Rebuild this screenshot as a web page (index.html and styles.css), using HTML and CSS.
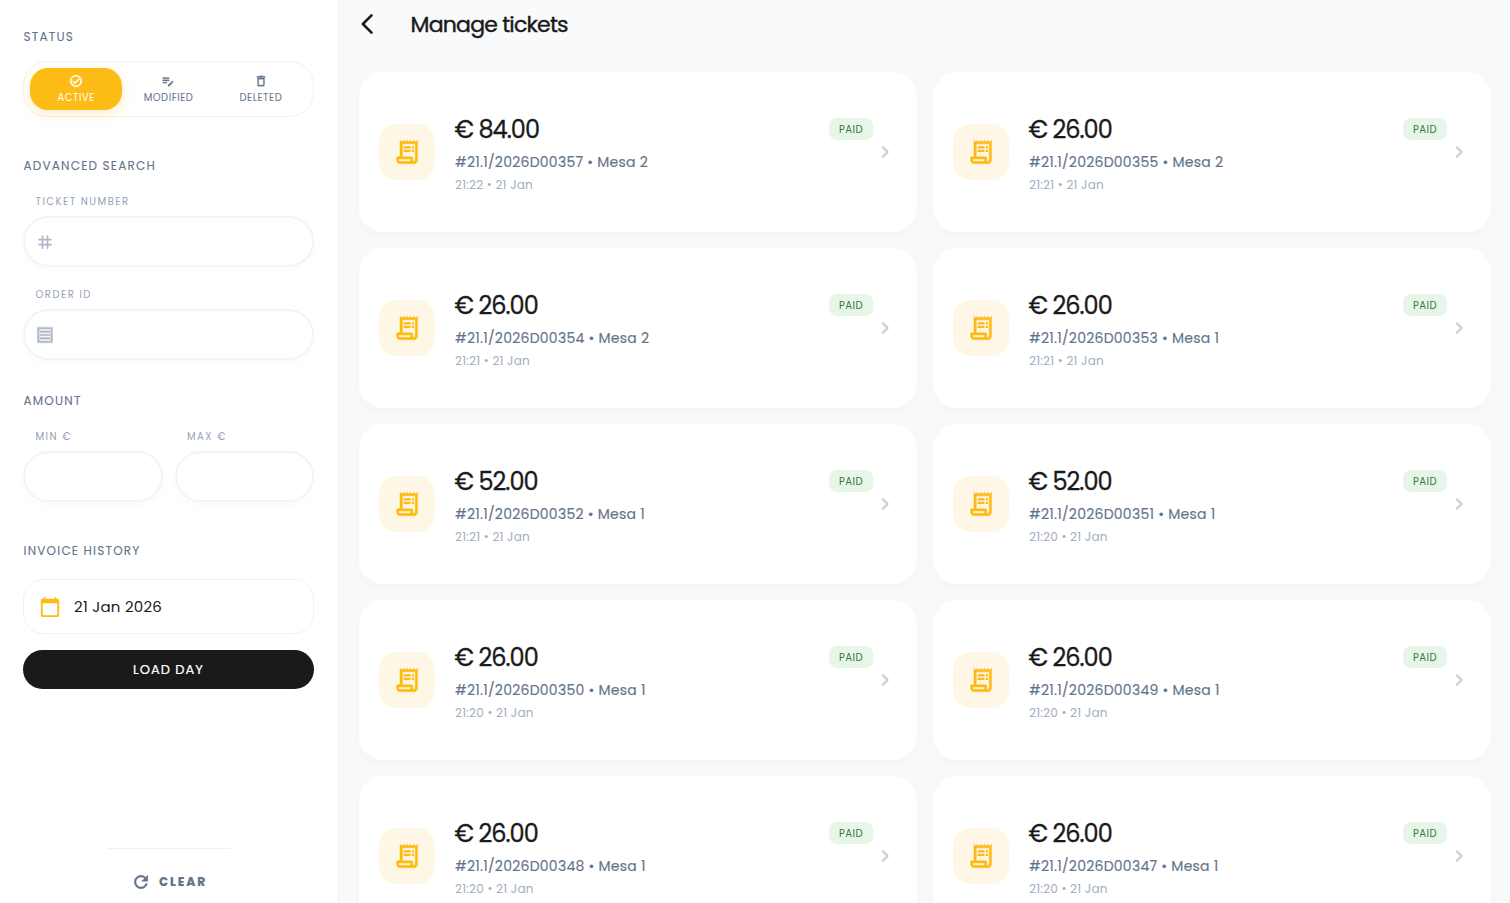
FILE: index.html
```
<!doctype html>
<html lang="en">
<head>
    <meta charset="utf-8">
    <title>Manage tickets</title>
    <link rel="stylesheet" href="styles.css">
</head>

<body>
<svg class="icons" width="0" height="0">
    <symbol id="i-check" viewBox="0 0 24 24"><path stroke="currentColor" stroke-width=".8" d="M12 2C6.48 2 2 6.48 2 12s4.48 10 10 10 10-4.48 10-10S17.52 2 12 2zm0 18c-4.41 0-8-3.59-8-8s3.59-8 8-8 8 3.59 8 8-3.59 8-8 8zm4.59-12.42L10 14.17l-2.59-2.58L6 13l4 4 8-8z"/></symbol>
    <symbol id="i-edit" viewBox="0 0 24 24"><path stroke="currentColor" stroke-width=".5" d="M3 10h11v2H3v-2zm0-2h11V6H3v2zm0 8h7v-2H3v2zm15.01-3.13.71-.71c.39-.39 1.02-.39 1.41 0l.71.71c.39.39.39 1.02 0 1.41l-.71.71-2.12-2.12zm-.71.71-5.3 5.3V21h2.12l5.3-5.3-2.12-2.12z"/></symbol>
    <symbol id="i-delete" viewBox="0 0 24 24"><path stroke="currentColor" stroke-width=".5" d="M6 19c0 1.1.9 2 2 2h8c1.1 0 2-.9 2-2V7H6v12zM8 9h8v10H8V9zm7.5-5-1-1h-5l-1 1H5v2h14V4h-3.5z"/></symbol>
    <symbol id="i-tag" viewBox="0 0 24 24"><path d="M9 4.8v14.4M15 4.8v14.4M4.8 9h14.4M4.8 15h14.4" fill="none" stroke="currentColor" stroke-width="2.1" stroke-linecap="round"/></symbol>
    <symbol id="i-receipt" viewBox="0 0 24 24"><path stroke="currentColor" stroke-width=".5" d="M19.5 3.5 18 2l-1.5 1.5L15 2l-1.5 1.5L12 2l-1.5 1.5L9 2 7.5 3.5 6 2 4.5 3.5 3 2v20l1.5-1.5L6 22l1.5-1.5L9 22l1.5-1.5L12 22l1.5-1.5L15 22l1.5-1.5L18 22l1.5-1.5L21 22V2l-1.5 1.5zM19 19.09H5V4.91h14v14.18zM6 15h12v2H6zm0-4h12v2H6zm0-4h12v2H6z"/></symbol>
    <symbol id="i-calendar" viewBox="0 0 24 24"><path d="M20 3h-1V2c0-.55-.45-1-1-1s-1 .45-1 1v1H7V2c0-.55-.45-1-1-1s-1 .45-1 1v1H4c-1.1 0-2 .9-2 2v16c0 1.1.9 2 2 2h16c1.1 0 2-.9 2-2V5c0-1.1-.9-2-2-2zm-1 18H5c-.55 0-1-.45-1-1V8h16v12c0 .55-.45 1-1 1z"/></symbol>
    <symbol id="i-refresh" viewBox="0 0 24 24"><path stroke="currentColor" stroke-width=".6" d="M17.65 6.35C16.2 4.9 14.21 4 12 4c-4.42 0-7.99 3.58-7.99 8s3.57 8 7.99 8c3.73 0 6.84-2.55 7.73-6h-2.08c-.82 2.33-3.04 4-5.65 4-3.31 0-6-2.69-6-6s2.69-6 6-6c1.66 0 3.14.69 4.22 1.78L13 11h7V4l-2.35 2.35z"/></symbol>
    <symbol id="i-back" viewBox="0 0 24 24"><path d="M16.5 3.4 7.9 12l8.6 8.6" fill="none" stroke="currentColor" stroke-width="2.6" stroke-linecap="round" stroke-linejoin="round"/></symbol>
    <symbol id="i-next" viewBox="0 0 24 24"><path d="M10 7.4 14.6 12 10 16.6" fill="none" stroke="currentColor" stroke-width="2.4" stroke-linecap="round" stroke-linejoin="round"/></symbol>
    <symbol id="i-ticket" viewBox="0 0 24 24"><path stroke="currentColor" stroke-width=".4" d="M19.5 3.5 18 2l-1.5 1.5L15 2l-1.5 1.5L12 2l-1.5 1.5L9 2 7.5 3.5 6 2v14H4c-.55 0-1 .45-1 1v2c0 1.66 1.34 3 3 3h12c1.66 0 3-1.34 3-3V2l-1.5 1.5zM15 20H6c-.55 0-1-.45-1-1v-1h10v2zm4-1c0 .55-.45 1-1 1s-1-.45-1-1v-2c0-.55-.45-1-1-1H8V5h11v14z"/><path d="M9 7h6v2H9zM16 7h2v2h-2zM9 10h6v2H9zM16 10h2v2h-2z"/></symbol>
</svg>

<div class="page">
    <aside class="sidebar">
        <h3 class="section-title">STATUS</h3>
        <div class="tabs">
            <button class="tab tab-active"><svg><use href="#i-check"/></svg><span>ACTIVE</span></button>
            <button class="tab"><svg><use href="#i-edit"/></svg><span>MODIFIED</span></button>
            <button class="tab"><svg><use href="#i-delete"/></svg><span>DELETED</span></button>
        </div>

        <h3 class="section-title section-search">ADVANCED SEARCH</h3>
        <label class="field">
            <span class="field-label">TICKET NUMBER</span>
            <span class="field-box"><svg><use href="#i-tag"/></svg></span>
        </label>
        <label class="field">
            <span class="field-label">ORDER ID</span>
            <span class="field-box"><svg><use href="#i-receipt"/></svg></span>
        </label>

        <h3 class="section-title section-amount">AMOUNT</h3>
        <div class="field-row">
            <label class="field">
                <span class="field-label">MIN €</span>
                <span class="field-box"></span>
            </label>
            <label class="field">
                <span class="field-label">MAX €</span>
                <span class="field-box"></span>
            </label>
        </div>

        <h3 class="section-title section-history">INVOICE HISTORY</h3>
        <div class="date"><svg><use href="#i-calendar"/></svg><span>21 Jan 2026</span></div>
        <button class="load">LOAD DAY</button>

        <div class="sidebar-footer">
            <button class="clear"><svg><use href="#i-refresh"/></svg><span>CLEAR</span></button>
        </div>
    </aside>

    <main class="content">
        <header class="header">
            <svg class="back"><use href="#i-back"/></svg>
            <h1>Manage tickets</h1>
        </header>
        <div class="tickets">
            <div class="ticket">
                <div class="ticket-icon"><svg><use href="#i-ticket"/></svg></div>
                <div class="ticket-info">
                    <div class="price">€ 84.00</div>
                    <div class="number">#21.1/2026D00357 • Mesa 2</div>
                    <div class="time">21:22 • 21 Jan</div>
                </div>
                <span class="badge">PAID</span>
                <svg class="next"><use href="#i-next"/></svg>
            </div>
            <div class="ticket">
                <div class="ticket-icon"><svg><use href="#i-ticket"/></svg></div>
                <div class="ticket-info">
                    <div class="price">€ 26.00</div>
                    <div class="number">#21.1/2026D00355 • Mesa 2</div>
                    <div class="time">21:21 • 21 Jan</div>
                </div>
                <span class="badge">PAID</span>
                <svg class="next"><use href="#i-next"/></svg>
            </div>
            <div class="ticket">
                <div class="ticket-icon"><svg><use href="#i-ticket"/></svg></div>
                <div class="ticket-info">
                    <div class="price">€ 26.00</div>
                    <div class="number">#21.1/2026D00354 • Mesa 2</div>
                    <div class="time">21:21 • 21 Jan</div>
                </div>
                <span class="badge">PAID</span>
                <svg class="next"><use href="#i-next"/></svg>
            </div>
            <div class="ticket">
                <div class="ticket-icon"><svg><use href="#i-ticket"/></svg></div>
                <div class="ticket-info">
                    <div class="price">€ 26.00</div>
                    <div class="number">#21.1/2026D00353 • Mesa 1</div>
                    <div class="time">21:21 • 21 Jan</div>
                </div>
                <span class="badge">PAID</span>
                <svg class="next"><use href="#i-next"/></svg>
            </div>
            <div class="ticket">
                <div class="ticket-icon"><svg><use href="#i-ticket"/></svg></div>
                <div class="ticket-info">
                    <div class="price">€ 52.00</div>
                    <div class="number">#21.1/2026D00352 • Mesa 1</div>
                    <div class="time">21:21 • 21 Jan</div>
                </div>
                <span class="badge">PAID</span>
                <svg class="next"><use href="#i-next"/></svg>
            </div>
            <div class="ticket">
                <div class="ticket-icon"><svg><use href="#i-ticket"/></svg></div>
                <div class="ticket-info">
                    <div class="price">€ 52.00</div>
                    <div class="number">#21.1/2026D00351 • Mesa 1</div>
                    <div class="time">21:20 • 21 Jan</div>
                </div>
                <span class="badge">PAID</span>
                <svg class="next"><use href="#i-next"/></svg>
            </div>
            <div class="ticket">
                <div class="ticket-icon"><svg><use href="#i-ticket"/></svg></div>
                <div class="ticket-info">
                    <div class="price">€ 26.00</div>
                    <div class="number">#21.1/2026D00350 • Mesa 1</div>
                    <div class="time">21:20 • 21 Jan</div>
                </div>
                <span class="badge">PAID</span>
                <svg class="next"><use href="#i-next"/></svg>
            </div>
            <div class="ticket">
                <div class="ticket-icon"><svg><use href="#i-ticket"/></svg></div>
                <div class="ticket-info">
                    <div class="price">€ 26.00</div>
                    <div class="number">#21.1/2026D00349 • Mesa 1</div>
                    <div class="time">21:20 • 21 Jan</div>
                </div>
                <span class="badge">PAID</span>
                <svg class="next"><use href="#i-next"/></svg>
            </div>
            <div class="ticket">
                <div class="ticket-icon"><svg><use href="#i-ticket"/></svg></div>
                <div class="ticket-info">
                    <div class="price">€ 26.00</div>
                    <div class="number">#21.1/2026D00348 • Mesa 1</div>
                    <div class="time">21:20 • 21 Jan</div>
                </div>
                <span class="badge">PAID</span>
                <svg class="next"><use href="#i-next"/></svg>
            </div>
            <div class="ticket">
                <div class="ticket-icon"><svg><use href="#i-ticket"/></svg></div>
                <div class="ticket-info">
                    <div class="price">€ 26.00</div>
                    <div class="number">#21.1/2026D00347 • Mesa 1</div>
                    <div class="time">21:20 • 21 Jan</div>
                </div>
                <span class="badge">PAID</span>
                <svg class="next"><use href="#i-next"/></svg>
            </div>
        </div>
    </main>
</div>
</body>

</html>
```
FILE: styles.css
```
* {box-sizing: border-box;}
body {margin: 0; height: 100vh; overflow: hidden; font-family: Poppins, Inter, "Liberation Sans", sans-serif; font-feature-settings: "cv11"; color: #1a1a1a; background: #f9fafc;}
h1, h3 {margin: 0; font-weight: 400;}
button {margin: 0; padding: 0; border: 0; background: none; font: inherit; font-feature-settings: inherit; color: inherit;}
svg {display: block; fill: currentColor; flex: none;}
.icons {position: absolute;}
.page {display: flex; height: 100vh;}

.sidebar {width: 339px; flex: none; padding: 28px 24px 0 23px; background: #fff; border-right: 1px solid #f0f1f3; display: flex; flex-direction: column;}
.section-title {height: 18px; flex: none; margin: 0 0 15px .5px; font-size: 12px; line-height: 18px; letter-spacing: 1.2px; color: #64748b; white-space: nowrap; -webkit-text-stroke: .1px currentColor;}
.section-search {margin-bottom: 18px;}
.section-amount {margin-top: 13px; margin-bottom: 18px;}
.section-history {margin-top: 21px; margin-bottom: 19px;}
.tabs {height: 56px; margin-bottom: 40px; padding: 6px; display: flex; border: 1px solid #f1f2f4; border-radius: 24px;}
.tab {flex: 1; height: 42px; padding-top: 6px; display: flex; flex-direction: column; align-items: center; border-radius: 18px; color: #64748b; font-size: 10px; line-height: 16px; letter-spacing: .5px;}
.tab svg {width: 14px; height: 14px; margin-bottom: 2px;}
.tab-active {background: #fdbb16; color: #fff; box-shadow: 0 4px 12px rgba(253, 187, 22, .25);}

.field {display: block; margin-bottom: 19px;}
.field-label {display: block; height: 17px; margin: 0 0 6px 12.5px; font-size: 10px; line-height: 17px; letter-spacing: 1.5px; color: #94a3b8;}
.field-box {display: flex; align-items: center; height: 51px; padding-left: 10px; border: 2px solid #f2f4fa; border-radius: 26px; background: #fff; box-shadow: 0 4px 10px rgba(0, 0, 0, .02); color: #b0b8c6;}
.field-box svg {width: 20px; height: 20px;}
.field-row {display: flex; gap: 12px;}
.field-row .field {flex: 1;}
.date {display: flex; align-items: center; height: 55px; padding-left: 15px; border: 1px solid #f1f2f4; border-radius: 20px; font-size: 15px; letter-spacing: .25px;}
.date svg {width: 22px; height: 22px; margin-right: 13px; color: #fdbb16;}
.load {height: 39px; margin-top: 16px; border-radius: 20px; background: #1a1a1a; color: #fff; font-size: 13px; letter-spacing: 1px; -webkit-text-stroke: .2px currentColor;}
.sidebar-footer {width: 124px; height: 55px; margin: auto auto 0 84px; border-top: 1px solid #f1f2f4;}
.clear {display: flex; align-items: center; margin: 23px 0 0 24px; color: #64748b; font-size: 12px; font-weight: 800; letter-spacing: 1.9px;}
.clear svg {width: 20px; height: 20px; margin-right: 8px;}

.content {flex: 1; padding: 0 19px 0 20px;}
.header {display: flex; align-items: center; height: 72px; padding-bottom: 24px;}
.back {width: 24px; height: 24px; margin: 0 32px 0 -4.4px;}
.header h1 {font-size: 22px; letter-spacing: -.8px; -webkit-text-stroke: .4px currentColor;}
.tickets {display: grid; grid-template-columns: 1fr 1fr; gap: 16px;}
.ticket {height: 160px; padding: 0 20px; display: flex; align-items: center; border-radius: 24px; background: #fff; box-shadow: 0 4px 16px rgba(0, 0, 0, .03);}
.ticket-icon {width: 56px; height: 56px; display: flex; align-items: center; justify-content: center; border-radius: 18px; background: #fff7e6; color: #fdbb16;}
.ticket-icon svg {width: 28px; height: 28px;}
.ticket-info {flex: 1; margin-left: 20px; padding-top: 3px; white-space: nowrap;}
.price {margin-left: -.6px; font-size: 24px; line-height: 34px; letter-spacing: -.95px; -webkit-text-stroke: .3px currentColor;}
.number {margin-top: 4px; font-size: 14px; line-height: 22px; letter-spacing: .25px; color: #64748b; -webkit-text-stroke: .15px currentColor;}
.time {margin-top: 3px; font-size: 12px; line-height: 18px; letter-spacing: .25px; color: #a0aec0;}
.badge {width: 44px; height: 22px; margin-bottom: 47px; border-radius: 8px; background: #e8f5e9; color: #2e7d32; font-size: 10px; line-height: 23px; letter-spacing: .5px; text-align: center;}
.next {width: 24px; height: 24px; color: #cbd0d8;}
```
